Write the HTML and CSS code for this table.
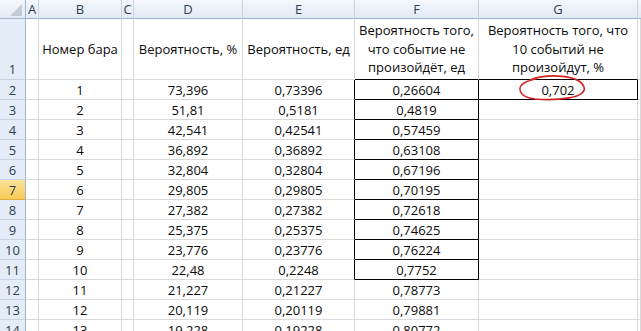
FILE: index.html
```html
<!DOCTYPE html>
<html lang="ru">
<head>
<meta charset="utf-8">
<link rel="stylesheet" href="styles.css">
</head>
<body>
<div class="sheet">
  <div class="grid">
    <div class="ch corner"><span class="tri"></span></div>
    <div class="ch">A</div><div class="ch">B</div><div class="ch">C</div><div class="ch">D</div><div class="ch">E</div><div class="ch">F</div><div class="ch">G</div><div class="ch end"></div>

    <div class="rh rh1">1</div><div class="c"></div><div class="c">Номер бара</div><div class="c"></div><div class="c">Вероятность, %</div><div class="c">Вероятность, ед</div><div class="c hd kb">Вероятность того, что событие не произойдёт, ед</div><div class="c hd kb">Вероятность того, что 10 событий не произойдут, %</div><div class="c"></div>

    <div class="rh">2</div><div class="c"></div><div class="c">1</div><div class="c"></div><div class="c">73,396</div><div class="c kr">0,73396</div><div class="c kr kb">0,26604</div><div class="c kr kb">0,702</div><div class="c"></div>
    <div class="rh">3</div><div class="c"></div><div class="c">2</div><div class="c"></div><div class="c">51,81</div><div class="c kr">0,5181</div><div class="c kr kb">0,4819</div><div class="c"></div><div class="c"></div>
    <div class="rh">4</div><div class="c"></div><div class="c">3</div><div class="c"></div><div class="c">42,541</div><div class="c kr">0,42541</div><div class="c kr kb">0,57459</div><div class="c"></div><div class="c"></div>
    <div class="rh">5</div><div class="c"></div><div class="c">4</div><div class="c"></div><div class="c">36,892</div><div class="c kr">0,36892</div><div class="c kr kb">0,63108</div><div class="c"></div><div class="c"></div>
    <div class="rh">6</div><div class="c"></div><div class="c">5</div><div class="c"></div><div class="c">32,804</div><div class="c kr">0,32804</div><div class="c kr kb">0,67196</div><div class="c"></div><div class="c"></div>
    <div class="rh sel">7</div><div class="c"></div><div class="c">6</div><div class="c"></div><div class="c">29,805</div><div class="c kr">0,29805</div><div class="c kr kb">0,70195</div><div class="c"></div><div class="c"></div>
    <div class="rh">8</div><div class="c"></div><div class="c">7</div><div class="c"></div><div class="c">27,382</div><div class="c kr">0,27382</div><div class="c kr kb">0,72618</div><div class="c"></div><div class="c"></div>
    <div class="rh">9</div><div class="c"></div><div class="c">8</div><div class="c"></div><div class="c">25,375</div><div class="c kr">0,25375</div><div class="c kr kb">0,74625</div><div class="c"></div><div class="c"></div>
    <div class="rh">10</div><div class="c"></div><div class="c">9</div><div class="c"></div><div class="c">23,776</div><div class="c kr">0,23776</div><div class="c kr kb">0,76224</div><div class="c"></div><div class="c"></div>
    <div class="rh">11</div><div class="c"></div><div class="c">10</div><div class="c"></div><div class="c">22,48</div><div class="c kr">0,2248</div><div class="c kr kb">0,7752</div><div class="c"></div><div class="c"></div>
    <div class="rh">12</div><div class="c"></div><div class="c">11</div><div class="c"></div><div class="c">21,227</div><div class="c">0,21227</div><div class="c">0,78773</div><div class="c"></div><div class="c"></div>
    <div class="rh">13</div><div class="c"></div><div class="c">12</div><div class="c"></div><div class="c">20,119</div><div class="c">0,20119</div><div class="c">0,79881</div><div class="c"></div><div class="c"></div>
    <div class="rh">14</div><div class="c"></div><div class="c">13</div><div class="c"></div><div class="c">19,228</div><div class="c">0,19228</div><div class="c">0,80772</div><div class="c"></div><div class="c"></div>
  </div>
  <svg class="mark" width="641" height="331" viewBox="0 0 641 331">
    <path d="M530 80 C548 73 580 75 584 87 C588 98 556 101 535 99 C518 97 517 87 524 83 C527 81 531 80 536 79" fill="none" stroke="#d42222" stroke-width="1.6" stroke-linecap="round"/>
  </svg>
</div>
</body>
</html>
```

FILE: styles.css
```css
html, body {
  margin: 0;
  padding: 0;
  background: #fff;
  overflow: hidden;
}
.sheet {
  position: relative;
  width: 641px;
  height: 331px;
  overflow: hidden;
  font-family: "Open Sans", "Noto Sans", sans-serif;
  font-size: 13px;
  color: #0a0a0a;
}
.grid {
  display: grid;
  grid-template-columns: 26px 13px 83px 12px 109px 112px 124px 159px 1fr;
  grid-template-rows: 19px 61px repeat(13, 20px);
}
.grid > div {
  box-sizing: border-box;
  border-right: 1px solid #d9d9d9;
  border-bottom: 1px solid #d9d9d9;
  display: flex;
  align-items: center;
  justify-content: center;
  text-align: center;
  white-space: nowrap;
  line-height: 18px;
}
.grid > .ch {
  background: linear-gradient(#f4f7fc, #e2eaf5);
  border-right: 1px solid #c7d3e2;
  border-bottom: 1px solid #9fb4cc;
  color: #2f3d52;
  font-size: 13px;
}
.grid > .corner {
  position: relative;
  border-right-color: #9fb4cc;
}
.tri {
  position: absolute;
  right: 3px;
  bottom: 2px;
  width: 0;
  height: 0;
  border-left: 12px solid transparent;
  border-bottom: 12px solid #c2cad6;
}
.grid > .end {
  border-right: none;
}
.grid > .rh {
  background: #e4ecf7;
  border-right: 1px solid #9fb4cc;
  border-bottom: 1px solid #c7d3e2;
  color: #2f3d52;
}
.grid > .rh1 {
  align-items: flex-end;
  padding-bottom: 1px;
}
.grid > .sel {
  background: linear-gradient(#fbe29a, #f6cc55);
  border-bottom-color: #e2ad3a;
}
.grid > .hd {
  white-space: normal;
  line-height: 18.5px;
  padding: 0 4px;
}
.grid > .kr {
  border-right-color: #000;
}
.grid > .kb {
  border-bottom-color: #000;
}
.mark {
  position: absolute;
  left: 0;
  top: 0;
  pointer-events: none;
}
```
